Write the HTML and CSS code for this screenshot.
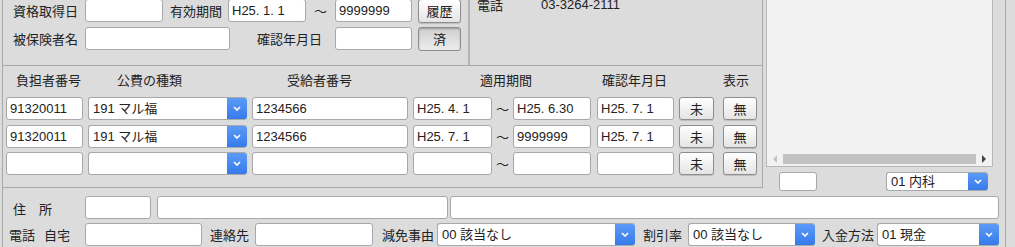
FILE: index.html
```html
<!DOCTYPE html>
<html lang="ja">
<head>
    <meta charset="UTF-8">
    <title>保険・公費</title>
    <link rel="stylesheet" href="styles.css">
</head>
<body>
<div class="frame">
    <div class="upper">
        <div class="left-col">
            <!-- 保険基本 -->
            <div class="top-panel">
                <div class="basic">
                    <div class="row first">
                        <span class="lbl lbl-main">資格取得日</span>
                        <input class="f w78" type="text" value="">
                        <span class="lbl lbl-kikan">有効期間</span>
                        <input class="f w78" type="text" value="H25. 1. 1">
                        <span class="tilde t-top">～</span>
                        <input class="f w77" type="text" value="9999999">
                        <button class="btn btn-top">履歴</button>
                    </div>
                    <div class="row">
                        <span class="lbl lbl-main">被保険者名</span>
                        <input class="f w145" type="text" value="">
                        <span class="lbl lbl-kakunin">確認年月日</span>
                        <input class="f w77" type="text" value="">
                        <button class="btn btn-top pressed">済</button>
                    </div>
                </div>
                <div class="tel">
                    <span>電話</span>
                    <span class="tel-no">03-3264-2111</span>
                </div>
            </div>

            <!-- 公費 -->
            <div class="mid-panel">
                <div class="head">
                    <span class="h1">負担者番号</span>
                    <span class="h2">公費の種類</span>
                    <span class="h3">受給者番号</span>
                    <span class="h4">適用期間</span>
                    <span class="h5">確認年月日</span>
                    <span class="h6">表示</span>
                </div>
                <div class="kohi-rows">
                    <div class="krow">
                        <input class="f c-futan" type="text" value="91320011">
                        <div class="sel c-shu"><span class="sel-text">191 マル福</span><span class="sel-btn"><svg width="8" height="5" viewBox="0 0 8 5"><path d="M1 1l3 3 3-3" stroke="#fff" stroke-width="1.6" fill="none"/></svg></span></div>
                        <input class="f c-jukyu" type="text" value="1234566">
                        <input class="f c-from" type="text" value="H25. 4. 1">
                        <span class="tilde t-row">～</span>
                        <input class="f c-to" type="text" value="H25. 6.30">
                        <input class="f c-kaku" type="text" value="H25. 7. 1">
                        <button class="btn b-mi">未</button>
                        <button class="btn b-mu">無</button>
                    </div>
                    <div class="krow">
                        <input class="f c-futan" type="text" value="91320011">
                        <div class="sel c-shu"><span class="sel-text">191 マル福</span><span class="sel-btn"><svg width="8" height="5" viewBox="0 0 8 5"><path d="M1 1l3 3 3-3" stroke="#fff" stroke-width="1.6" fill="none"/></svg></span></div>
                        <input class="f c-jukyu" type="text" value="1234566">
                        <input class="f c-from" type="text" value="H25. 7. 1">
                        <span class="tilde t-row">～</span>
                        <input class="f c-to" type="text" value="9999999">
                        <input class="f c-kaku" type="text" value="H25. 7. 1">
                        <button class="btn b-mi">未</button>
                        <button class="btn b-mu">無</button>
                    </div>
                    <div class="krow">
                        <input class="f c-futan" type="text" value="">
                        <div class="sel c-shu"><span class="sel-text"></span><span class="sel-btn"><svg width="8" height="5" viewBox="0 0 8 5"><path d="M1 1l3 3 3-3" stroke="#fff" stroke-width="1.6" fill="none"/></svg></span></div>
                        <input class="f c-jukyu" type="text" value="">
                        <input class="f c-from" type="text" value="">
                        <span class="tilde t-row">～</span>
                        <input class="f c-to" type="text" value="">
                        <input class="f c-kaku" type="text" value="">
                        <button class="btn b-mi">未</button>
                        <button class="btn b-mu">無</button>
                    </div>
                </div>
            </div>
        </div>

        <div class="right-col">
            <div class="list-box">
                <div class="hscroll">
                    <span class="arrow"><svg width="5" height="8" viewBox="0 0 5 8"><path d="M4 0v8L0 4z" fill="#c4c4c4"/></svg></span>
                    <span class="thumb"></span>
                    <span class="arrow"><svg width="5" height="8" viewBox="0 0 5 8"><path d="M1 0v8l4-4z" fill="#444"/></svg></span>
                </div>
            </div>
            <div class="under-list">
                <input class="f small-in" type="text" value="">
                <div class="sel ka-sel"><span class="sel-text">01 内科</span><span class="sel-btn"><svg width="8" height="5" viewBox="0 0 8 5"><path d="M1 1l3 3 3-3" stroke="#fff" stroke-width="1.6" fill="none"/></svg></span></div>
            </div>
        </div>
    </div>

    <!-- 住所・電話 -->
    <div class="lower">
        <div class="row">
            <span class="lbl lbl-main lbl-addr">住　所</span>
            <input class="f w66" type="text" value="">
            <input class="f addr1" type="text" value="">
            <input class="f addr2" type="text" value="">
        </div>
        <div class="row">
            <span class="lbl lbl-tel"><span>電話</span><span class="jitaku">自宅</span></span>
            <input class="f w117" type="text" value="">
            <span class="lbl lbl-renraku">連絡先</span>
            <input class="f w118" type="text" value="">
            <span class="lbl lbl-genmen">減免事由</span>
            <div class="sel genmen-sel"><span class="sel-text">00 該当なし</span><span class="sel-btn"><svg width="8" height="5" viewBox="0 0 8 5"><path d="M1 1l3 3 3-3" stroke="#fff" stroke-width="1.6" fill="none"/></svg></span></div>
            <span class="lbl lbl-waribiki">割引率</span>
            <div class="sel wari-sel"><span class="sel-text">00 該当なし</span><span class="sel-btn"><svg width="8" height="5" viewBox="0 0 8 5"><path d="M1 1l3 3 3-3" stroke="#fff" stroke-width="1.6" fill="none"/></svg></span></div>
            <span class="lbl lbl-nyukin">入金方法</span>
            <div class="sel nyukin-sel"><span class="sel-text">01 現金</span><span class="sel-btn"><svg width="8" height="5" viewBox="0 0 8 5"><path d="M1 1l3 3 3-3" stroke="#fff" stroke-width="1.6" fill="none"/></svg></span></div>
        </div>
    </div>
</div>
</body>
</html>
```

FILE: styles.css
```css
* {
    box-sizing: border-box;
}

body {
    margin: 0;
    background-color: #dcdcdc;
    font-family: "Noto Sans CJK JP", sans-serif;
    font-size: 13px;
    color: #222;
    overflow: hidden;
}

.frame {
    margin-left: 2px;
    width: 1004px;
    height: 247px;
    border-left: 1px solid #a9a9a9;
    border-right: 1px solid #a9a9a9;
}

.upper {
    display: flex;
    height: 188px;
}

.left-col {
    width: 760px;
    border-right: 1px solid #a9a9a9;
}

/* common parts */
.row {
    display: flex;
    align-items: center;
    height: 23px;
}

.lbl {
    white-space: nowrap;
    line-height: 16px;
}

.f {
    height: 23px;
    margin: 0;
    padding: 0 3px;
    border: 1px solid #a8a8a8;
    border-radius: 3px;
    background-color: #fff;
    font-family: "Liberation Sans", "Noto Sans CJK JP", sans-serif;
    font-size: 13px;
    color: #222;
    outline: none;
}

.sel {
    display: flex;
    height: 23px;
    border: 1px solid #a8a8a8;
    border-right: none;
    border-radius: 3px;
    background-color: #fff;
    font-family: "Liberation Sans", "Noto Sans CJK JP", sans-serif;
    overflow: hidden;
}

.sel-text {
    flex: 1;
    padding-left: 4px;
    line-height: 21px;
    white-space: nowrap;
}

.sel-btn {
    width: 20px;
    margin-top: -1px;
    margin-bottom: -1px;
    display: flex;
    align-items: center;
    justify-content: center;
    background: linear-gradient(#5d9cf7, #3479ea);
    border-radius: 0 3px 3px 0;
}

.btn {
    height: 23px;
    margin: 0;
    padding: 0;
    border: 1px solid #8e8e8e;
    border-radius: 3px;
    background: linear-gradient(#ffffff, #e4e4e4);
    font-family: "Noto Sans CJK JP", sans-serif;
    font-size: 13px;
    color: #222;
    box-shadow: 0 1px 1px rgba(0,0,0,0.15);
}

.btn.pressed {
    background: linear-gradient(#cfcfcf, #ececec);
    box-shadow: inset 0 1px 2px rgba(0,0,0,0.25);
}

.tilde {
    text-align: center;
    font-size: 13px;
}

/* 保険基本 */
.top-panel {
    display: flex;
    height: 66px;
    border-bottom: 1px solid #a9a9a9;
}

.basic {
    width: 467px;
    border-right: 2px solid #b3b3b3;
}

.basic .row {
    margin-bottom: 5px;
}

.basic .row.first {
    margin-top: -1px;
}

.lbl-main {
    width: 82px;
    padding-left: 10px;
}

.lbl-addr {
    padding-top: 3px;
}

.lbl-kikan {
    width: 65px;
    padding-right: 6px;
    text-align: right;
}

.lbl-kakunin {
    width: 105px;
    padding-right: 13px;
    text-align: right;
}

.w66 { width: 66px; }
.w77 { width: 77px; }
.w78 { width: 78px; }
.w117 { width: 117px; }
.w118 { width: 118px; }
.w145 { width: 145px; }

.t-top {
    width: 29px;
}

.btn-top {
    width: 43px;
    height: 24px;
    margin-left: 6px;
}

.tel {
    display: flex;
    padding-left: 7px;
    margin-top: -3px;
    line-height: 16px;
}

.tel-no {
    margin-left: 38px;
    font-family: "Liberation Sans", sans-serif;
}

/* 公費 */
.mid-panel {
    height: 122px;
    padding-top: 5px;
    border-bottom: 1px solid #a9a9a9;
}

.head {
    display: flex;
    height: 18px;
    line-height: 18px;
    margin-bottom: 8px;
}

.h1 { margin-left: 13px; }
.h2 { margin-left: 36px; }
.h3 { margin-left: 105px; }
.h4 { margin-left: 128px; }
.h5 { margin-left: 70px; }
.h6 { margin-left: 56px; }

.kohi-rows {
    display: flex;
    flex-direction: column;
    gap: 4.5px;
}

.krow {
    display: flex;
    align-items: center;
}

.c-futan { width: 77px; margin-left: 3px; }
.c-shu { width: 159px; margin-left: 5px; }
.c-jukyu { width: 156px; margin-left: 5px; }
.c-from { width: 79px; margin-left: 5px; }
.t-row { width: 21px; }
.c-to { width: 78px; }
.c-kaku { width: 77px; margin-left: 6px; }
.b-mi { width: 35px; margin-left: 5px; }
.b-mu { width: 34px; margin-left: 9px; }

/* 右側リスト */
.right-col {
    width: 242px;
}

.list-box {
    display: flex;
    flex-direction: column;
    justify-content: flex-end;
    margin-left: 3px;
    width: 227px;
    height: 167px;
    padding: 0 1px 1px;
    background-color: #f2f2f2;
    border: 1px solid #b8b8b8;
    border-top: none;
}

.hscroll {
    display: flex;
    align-items: center;
    height: 12px;
}

.arrow {
    width: 15px;
    display: flex;
    justify-content: center;
}

.thumb {
    width: 193px;
    height: 10px;
    background-color: #c2c2c2;
}

.under-list {
    display: flex;
    margin-top: 5px;
}

.small-in {
    width: 38px;
    height: 19px;
    margin-left: 16px;
}

.ka-sel {
    width: 102px;
    height: 19px;
    margin-left: 69px;
}

.ka-sel .sel-text {
    line-height: 17px;
}

/* 住所・電話 */
.lower {
    padding-top: 8px;
}

.lower .row {
    margin-bottom: 4px;
}

.addr1 { width: 291px; margin-left: 6px; }
.addr2 { width: 549px; margin-left: 2px; }

.lbl-tel {
    display: flex;
    width: 82px;
    padding-left: 6px;
}

.jitaku {
    margin-left: 9px;
}

.lbl-renraku { margin-left: 8px; width: 45px; }
.lbl-genmen { margin-left: 9px; width: 55px; }
.genmen-sel { width: 198px; }
.lbl-waribiki { margin-left: 8px; width: 45px; }
.wari-sel { width: 127px; }
.lbl-nyukin { margin-left: 7px; width: 55px; }
.nyukin-sel { width: 122px; }
```
